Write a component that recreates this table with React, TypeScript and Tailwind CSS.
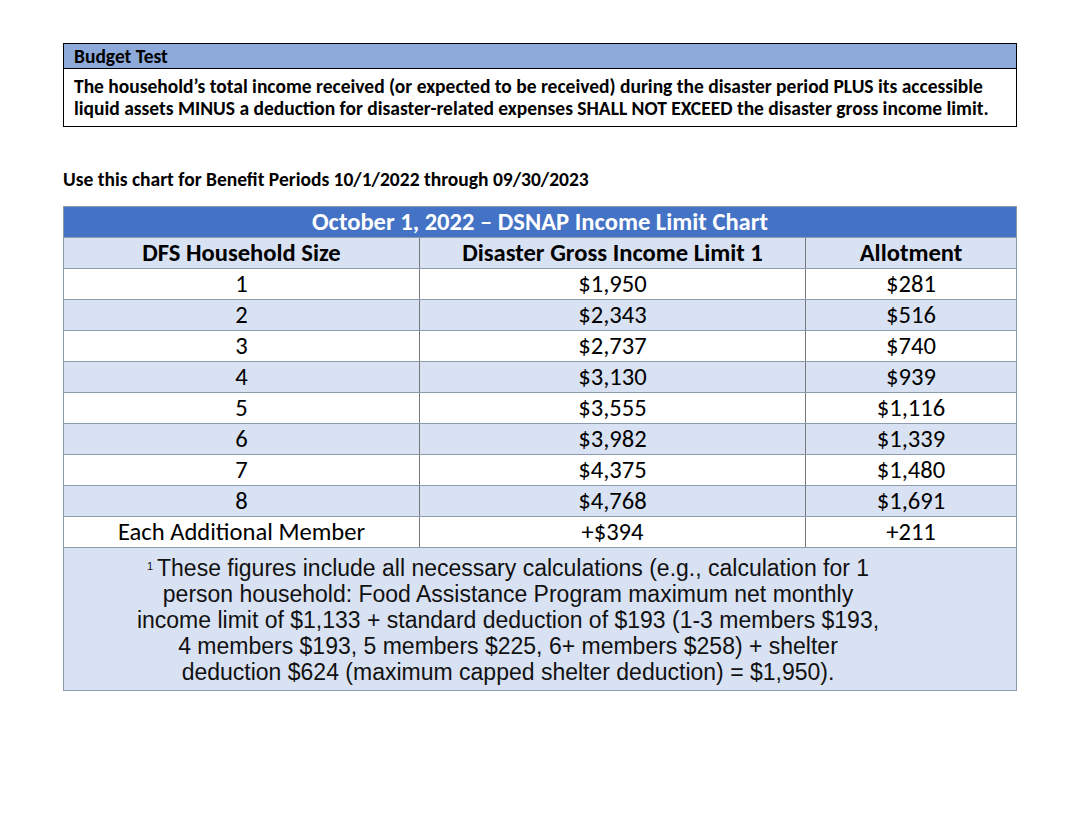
import React from 'react'

const rows = [
  ['1', '$1,950', '$281'],
  ['2', '$2,343', '$516'],
  ['3', '$2,737', '$740'],
  ['4', '$3,130', '$939'],
  ['5', '$3,555', '$1,116'],
  ['6', '$3,982', '$1,339'],
  ['7', '$4,375', '$1,480'],
  ['8', '$4,768', '$1,691'],
]

export default function App() {
  return (
    <div className="w-[1080px] h-[818px] bg-white pt-[43px] pl-[63px] text-black font-['Carlito','Lato',sans-serif]">
      {/* Budget test box */}
      <div className="w-[954px] border border-black">
        <div className="h-[25px] bg-[#8eaadb] border-b border-black px-[10px] text-[19.5px] font-bold leading-[24px] whitespace-nowrap">
          Budget Test
        </div>
        <div className="bg-white px-[10px] pt-[6px] pb-[7px] text-[19.5px] font-bold leading-[22px] whitespace-nowrap">
          The household’s total income received (or expected to be received) during the disaster period PLUS its accessible
          <br />
          liquid assets MINUS a deduction for disaster-related expenses SHALL NOT EXCEED the disaster gross income limit.
        </div>
      </div>

      <p className="mt-[42px] text-[19.5px] font-bold leading-[20px] whitespace-nowrap">
        Use this chart for Benefit Periods 10/1/2022 through 09/30/2023
      </p>

      {/* Income limit chart */}
      <table className="mt-[17px] w-[954px] border-collapse text-[24.6px] leading-[30px]">
        <thead>
          <tr className="bg-[#4472c4] text-white">
            <th colSpan={3} className="h-[31px] font-bold border border-[#8e9aaf] text-center">
              October 1, 2022 – DSNAP Income Limit Chart
            </th>
          </tr>
          <tr className="bg-[#d9e2f3]">
            <th className="w-[356px] h-[31px] font-bold border border-[#8e9aaf] border-r-[#777]">DFS Household Size</th>
            <th className="w-[386px] font-bold border border-[#8e9aaf] border-r-[#777]">Disaster Gross Income Limit 1</th>
            <th className="font-bold border border-[#8e9aaf]">Allotment</th>
          </tr>
        </thead>
        <tbody>
          {rows.map((r, i) => (
            <tr key={r[0]} className={i % 2 === 0 ? 'bg-white' : 'bg-[#d9e2f3]'}>
              <td className="h-[31px] text-center border border-[#8e9aaf] border-r-[#777]">{r[0]}</td>
              <td className="text-center border border-[#8e9aaf] border-r-[#777]">{r[1]}</td>
              <td className="text-center border border-[#8e9aaf]">{r[2]}</td>
            </tr>
          ))}
          <tr className="bg-white">
            <td className="h-[31px] text-center border border-[#8e9aaf] border-r-[#777]">Each Additional Member</td>
            <td className="text-center border border-[#8e9aaf] border-r-[#777]">+$394</td>
            <td className="text-center border border-[#8e9aaf]">+211</td>
          </tr>
          <tr className="bg-[#d9e2f3]">
            <td colSpan={3} className="h-[143px] border border-[#8e9aaf] pt-[7px] pb-[5px] pr-[64px] text-center align-top font-['Liberation_Sans',Arial,sans-serif] text-[23px] leading-[26px] text-[#111] whitespace-nowrap">
              <span className="text-[11px] align-top relative top-[-2px] mr-[4px]">1</span>These figures include all necessary calculations (e.g., calculation for 1
              <br />
              person household: Food Assistance Program maximum net monthly
              <br />
              income limit of $1,133 + standard deduction of $193 (1-3 members $193,
              <br />
              4 members $193, 5 members $225, 6+ members $258) + shelter
              <br />
              deduction $624 (maximum capped shelter deduction) = $1,950).
            </td>
          </tr>
        </tbody>
      </table>
    </div>
  )
}
